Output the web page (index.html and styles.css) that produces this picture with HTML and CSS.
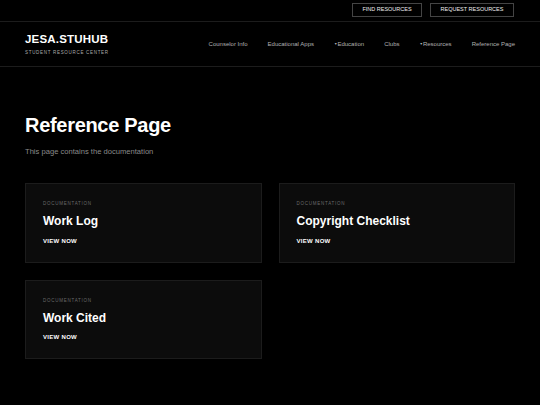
FILE: index.html
```html
<!DOCTYPE html>
<html lang="en">
<head>
<meta charset="utf-8">
<title>Reference Page</title>
<link rel="stylesheet" href="styles.css">
</head>
<body>
<div class="topbar">
  <a class="top-btn find">FIND RESOURCES</a>
  <a class="top-btn request">REQUEST RESOURCES</a>
</div>
<header class="header">
  <div class="logo">
    <div class="logo-title">JESA.STUHUB</div>
    <div class="logo-sub">STUDENT RESOURCE CENTER</div>
  </div>
  <nav class="nav">
    <a>Counselor Info</a>
    <a>Educational Apps</a>
    <a><span class="caret">▼</span>Education</a>
    <a>Clubs</a>
    <a><span class="caret">▼</span>Resources</a>
    <a>Reference Page</a>
  </nav>
</header>
<main class="main">
  <h1 class="page-title">Reference Page</h1>
  <p class="page-sub">This page contains the documentation</p>
  <div class="cards">
    <div class="card">
      <div class="card-label">DOCUMENTATION</div>
      <div class="card-title">Work Log</div>
      <div class="card-link">VIEW NOW</div>
    </div>
    <div class="card">
      <div class="card-label">DOCUMENTATION</div>
      <div class="card-title">Copyright Checklist</div>
      <div class="card-link">VIEW NOW</div>
    </div>
    <div class="card">
      <div class="card-label">DOCUMENTATION</div>
      <div class="card-title">Work Cited</div>
      <div class="card-link">VIEW NOW</div>
    </div>
  </div>
</main>
</body>
</html>
```
FILE: styles.css
```css
* { box-sizing: border-box; }
html, body {
  margin: 0;
  background: #000;
  color: #fff;
  font-family: "Liberation Sans", Arial, sans-serif;
}
.topbar {
  height: 22px;
  border-bottom: 1px solid #1c1c1c;
  display: flex;
  justify-content: flex-end;
  align-items: center;
  gap: 8px;
  padding: 0 26px 1px 0;
}
.top-btn {
  height: 14px;
  border: 1px solid #444;
  display: flex;
  align-items: center;
  justify-content: center;
  font-size: 5.5px;
  color: #eee;
  line-height: 1;
}
.find { width: 70px; }
.request { width: 84px; }
.header {
  height: 45px;
  border-bottom: 1px solid #1c1c1c;
  display: flex;
  align-items: center;
  justify-content: space-between;
  padding: 0 25px;
}
.logo-title {
  font-size: 11.5px;
  line-height: 14px;
  font-weight: bold;
  letter-spacing: 0.2px;
}
.logo-sub {
  margin-top: 4px;
  font-size: 4.5px;
  line-height: 6px;
  letter-spacing: 0.7px;
  color: #aaa;
}
.nav {
  display: flex;
  gap: 20px;
  font-size: 6px;
  color: #b0b0b0;
}
.caret {
  font-size: 3.5px;
  vertical-align: 1px;
}
.main {
  padding: 46px 25px 0;
}
.page-title {
  margin: 0;
  font-size: 20px;
  line-height: 24px;
  letter-spacing: -0.3px;
  font-weight: bold;
}
.page-sub {
  margin: 10px 0 0;
  font-size: 7.6px;
  line-height: 10px;
  color: #8a8a8a;
}
.cards {
  margin-top: 26px;
  display: grid;
  grid-template-columns: 1fr 1fr;
  gap: 17px;
}
.card {
  background: #0c0c0c;
  border: 1px solid #1c1c1c;
  padding: 17px 17px 17px;
}
.card-label {
  font-size: 4.5px;
  line-height: 6px;
  letter-spacing: 0.75px;
  color: #6a6a6a;
}
.card-title {
  margin-top: 7px;
  font-size: 12px;
  line-height: 14px;
  font-weight: bold;
}
.card-link {
  margin-top: 8.5px;
  font-size: 6px;
  line-height: 8px;
  font-weight: bold;
  letter-spacing: 0.3px;
}
```
